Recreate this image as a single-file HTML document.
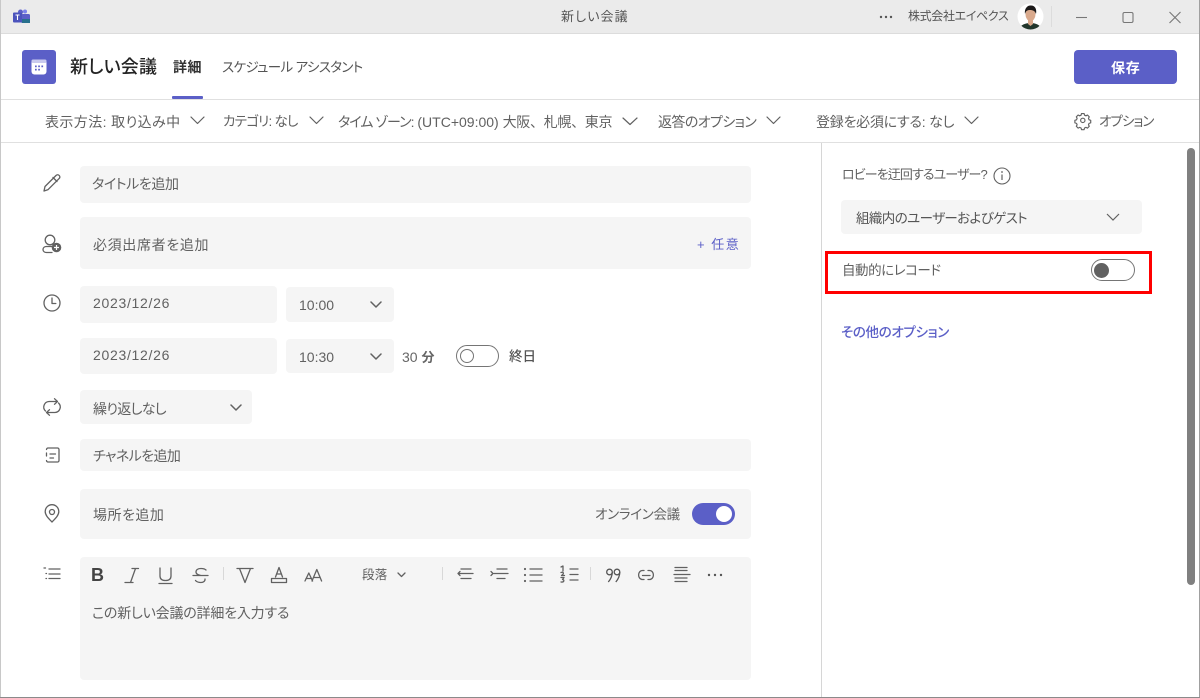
<!DOCTYPE html>
<html lang="ja"><head><meta charset="utf-8"><title>新しい会議</title>
<style>
html,body{margin:0;padding:0;width:1200px;height:698px;overflow:hidden;background:#fff}
body{position:relative;font-family:"Liberation Sans","Noto Sans CJK JP",sans-serif;color:#616161;font-size:14px}
.t{position:absolute;white-space:nowrap;line-height:20px;height:20px;font-feature-settings:"palt" 1}
.b{position:absolute;background:#f5f5f5;border-radius:4px}
.l{position:absolute;background:#e0e0e0}
svg{position:absolute;overflow:visible}
.s{fill:none;stroke:#616161;stroke-width:1.2;stroke-linecap:round;stroke-linejoin:round}
.c{fill:none;stroke:#616161;stroke-width:1.3;stroke-linecap:round;stroke-linejoin:round}
</style></head><body>
<div style="position:absolute;left:0;top:0;width:1200px;height:33px;background:#ebebeb"></div>
<div class="l" style="left:0;top:33px;width:1200px;height:1px;background:#dcdcdc"></div>
<div class="l" style="left:0;top:99px;width:1200px;height:1px"></div>
<div class="l" style="left:0;top:142px;width:1200px;height:1px"></div>
<div class="l" style="left:821px;top:143px;width:1px;height:555px;background:#d6d6d6"></div>
<div style="position:absolute;left:0;top:0;width:1px;height:698px;background:#c8c8c8"></div>
<div style="position:absolute;left:1199px;top:0;width:1px;height:698px;background:#a0a0a0"></div>
<div style="position:absolute;left:0;top:697px;width:1200px;height:1px;background:#8a8a8a"></div>

<svg style="left:12px;top:8px" width="20" height="18" viewBox="0 0 20 18">
<rect x="6" y="1.5" width="5" height="5" rx="2.5" fill="#5b5fc7"/><circle cx="13" cy="3.5" r="2" fill="#7b83eb"/>
<rect x="9" y="6" width="9" height="9" rx="1.5" fill="#5b5fc7"/><rect x="10" y="11" width="8" height="4" fill="#28708c"/>
<rect x="1" y="4.5" width="9" height="10" rx="1" fill="#4b53bc"/><path d="M3.5 7h4M5.5 7v5" stroke="#fff" stroke-width="1.1" fill="none"/></svg>
<div class="t" style="left:561px;top:7px;font-size:13px;color:#555;letter-spacing:1.1px">新しい会議</div>

<svg style="left:879px;top:15px" width="14" height="4"><circle cx="2" cy="2" r="1.2" fill="#555"/><circle cx="7" cy="2" r="1.2" fill="#555"/><circle cx="12" cy="2" r="1.2" fill="#555"/></svg>
<div class="t" style="left:908px;top:6px;font-size:12px;color:#555;letter-spacing:-.35px">株式会社エイペクス</div>
<svg style="left:1017px;top:3px" width="27" height="27" viewBox="0 0 27 27">
<defs><clipPath id="av"><circle cx="13.5" cy="13.5" r="13"/></clipPath></defs>
<circle cx="13.5" cy="13.5" r="13" fill="#fff"/>
<g clip-path="url(#av)"><path d="M2 27c1-5 6-7 11.500-7s10 2 11.500 7z" fill="#21362c"/><ellipse cx="13.500" cy="11.500" rx="5" ry="6.500" fill="#d9a98c"/><path d="M11 17h5v4l-2.500 2-2.500-2z" fill="#d9a98c"/><path d="M8 11c-1-6 3-9 6-8.500 4 0 6 3.500 5 8.500-1-3-3-4-6-4s-4 1-5 4z" fill="#1c1a1a"/></g></svg>
<div class="l" style="left:1051px;top:6px;width:1px;height:21px;background:#dcdcdc"></div>
<svg style="left:1076px;top:10px" width="112" height="14" viewBox="0 0 112 14">
<path d="M0 7.500h11" stroke="#777" stroke-width="1.1" fill="none"/>
<rect x="47" y="2.500" width="10" height="10" rx="1.500" fill="none" stroke="#777" stroke-width="1.100"/>
<path d="M93.500 2l11 11M104.500 2l-11 11" stroke="#777" stroke-width="1.100" fill="none"/></svg>

<div style="position:absolute;left:22px;top:50px;width:34px;height:34px;background:#5b5fc7;border-radius:3px"></div>
<svg style="left:31px;top:59px" width="16" height="16" viewBox="0 0 16 16">
<rect x="0.500" y="0.500" width="15" height="15" rx="3" fill="#fff"/><rect x="0.500" y="0.500" width="15" height="3.500" rx="1.500" fill="#c9caee"/>
<g fill="#5b5fc7"><rect x="4" y="6.500" width="1.700" height="1.700"/><rect x="7.200" y="6.500" width="1.700" height="1.700"/><rect x="10.400" y="6.500" width="1.700" height="1.700"/><rect x="4" y="9.800" width="1.700" height="1.700"/><rect x="7.200" y="9.800" width="1.700" height="1.700"/></g></svg>
<div class="t" style="left:70px;top:57px;font-size:18px;font-weight:500;color:#242424;letter-spacing:.2px">新しい会議</div>
<div class="t" style="left:173px;top:57px;font-size:14px;font-weight:700;color:#333;letter-spacing:.5px">詳細</div>
<div style="position:absolute;left:172px;top:96px;width:31px;height:3px;background:#5b5fc7;border-radius:1px"></div>
<div class="t" style="left:222px;top:58px;font-size:13.500px;color:#555;letter-spacing:-.65px">スケジュール アシスタント</div>
<div style="position:absolute;left:1074px;top:50px;width:103px;height:34px;background:#5b5fc7;border-radius:4px"></div>
<div class="t" style="left:1111px;top:58px;font-size:14px;font-weight:700;color:#fff;letter-spacing:.7px">保存</div>

<div class="t" style="left:45px;top:112px;font-size:14px;letter-spacing:.4px">表示方法: 取り込み中</div>
<div class="t" style="left:223px;top:112px;font-size:13.500px;letter-spacing:-.75px">カテゴリ: なし</div>
<div class="t" style="left:338px;top:112px;font-size:14px"><span style="letter-spacing:-1px">タイム ゾーン:</span> (UTC+09:00) <span style="font-feature-settings:normal;letter-spacing:-.3px">大阪、札幌、東京</span></div>
<div class="t" style="left:658px;top:112px;font-size:14px;letter-spacing:-.6px">返答のオプション</div>
<div class="t" style="left:816px;top:112px;font-size:14px;letter-spacing:-.25px">登録を必須にする: なし</div>
<div class="t" style="left:1099px;top:112px;font-size:13.500px;letter-spacing:-1px">オプション</div>
<svg style="left:0;top:0" width="1200" height="130">
<g class="s"><path d="M191 117l6.500 6.500 6.500-6.500M310 117l6.500 6.500 6.500-6.500M623 118l7 6.500 7-6.500M767 117l6.500 6.500 6.500-6.500M965 117l6.500 6.500 6.500-6.500"/>
<g transform="translate(1082.800 120.500) scale(.72) translate(-1082.800 -120.500)" style="stroke-width:1.600">
<path d="M1081 112.300h3.600l.6 2.300 2 .9 2.100-1.100 2.500 2.600-1.100 2 .8 2 2.300.7v3.600l-2.300.7-.8 2 1.100 2-2.500 2.600-2.100-1.100-2 .9-.6 2.300H1081l-.6-2.300-2-.9-2.100 1.100-2.500-2.600 1.100-2-.8-2-2.300-.7v-3.600l2.300-.7.800-2-1.100-2 2.500-2.600 2.100 1.100 2-.9z" transform="translate(0 -1.500)"/><circle cx="1082.800" cy="120.300" r="3"/></g></g></svg>

<div class="b" style="left:80px;top:166px;width:671px;height:37px"></div>
<div class="t" style="left:92px;top:174px;letter-spacing:-.4px">タイトルを追加</div>
<div class="b" style="left:80px;top:217px;width:671px;height:52px"></div>
<div class="t" style="left:93px;top:235px;letter-spacing:.65px">必須出席者を追加</div>
<div class="t" style="left:697px;top:235px;font-size:13px;color:#5b5fc7;letter-spacing:1.500px">+ 任意</div>
<div class="b" style="left:80px;top:286px;width:197px;height:37px"></div>
<div class="t" style="left:93px;top:293px;letter-spacing:.7px">2023/12/26</div>
<div class="b" style="left:286px;top:287px;width:108px;height:35px"></div>
<div class="t" style="left:299px;top:295px">10:00</div>
<div class="b" style="left:80px;top:338px;width:197px;height:36px"></div>
<div class="t" style="left:93px;top:345px;letter-spacing:.7px">2023/12/26</div>
<div class="b" style="left:286px;top:339px;width:108px;height:34px"></div>
<div class="t" style="left:299px;top:347px">10:30</div>
<div class="t" style="left:402px;top:347px;color:#666">30 <span style="font-weight:700;font-size:13px">分</span></div>
<div style="position:absolute;box-sizing:border-box;left:456px;top:345px;width:43px;height:22px;border:1.300px solid #757575;border-radius:11px;background:#fff"></div>
<div style="position:absolute;box-sizing:border-box;left:460px;top:349px;width:14px;height:14px;border:1.300px solid #757575;border-radius:50%"></div>
<div class="t" style="left:509px;top:347px;font-size:13.500px;font-weight:500;color:#555">終日</div>
<div class="b" style="left:80px;top:390px;width:172px;height:34px"></div>
<div class="t" style="left:93px;top:399px;letter-spacing:-.7px">繰り返しなし</div>
<div class="b" style="left:80px;top:439px;width:671px;height:32px"></div>
<div class="t" style="left:93px;top:446px;letter-spacing:-.6px">チャネルを追加</div>
<div class="b" style="left:80px;top:489px;width:671px;height:50px"></div>
<div class="t" style="left:93px;top:505px;letter-spacing:.5px">場所を追加</div>
<div class="t" style="left:595px;top:505px;font-size:13.500px;letter-spacing:-.3px">オンライン会議</div>
<div style="position:absolute;left:692px;top:503px;width:43px;height:22px;background:#5b5fc7;border-radius:11px"></div>
<div style="position:absolute;left:716px;top:506px;width:16px;height:16px;background:#fff;border-radius:50%"></div>
<div class="b" style="left:80px;top:557px;width:671px;height:123px"></div>
<div class="t" style="left:92px;top:603px;letter-spacing:-.2px">この新しい会議の詳細を入力する</div>
<div class="t" style="left:91px;top:565px;font-size:18px;font-weight:700;color:#444">B</div>
<div class="t" style="left:362px;top:565px;font-size:12.500px;letter-spacing:.2px">段落</div>

<div class="t" style="left:842px;top:165px;font-size:13px;letter-spacing:-.9px">ロビーを迂回するユーザー?</div>
<div class="b" style="left:841px;top:200px;width:301px;height:34px"></div>
<div class="t" style="left:856px;top:209px;font-size:13.500px;color:#555;letter-spacing:-.6px">組織内のユーザーおよびゲスト</div>
<div style="position:absolute;box-sizing:border-box;left:825px;top:251px;width:327px;height:43px;border:3px solid #f00"></div>
<div class="t" style="left:842px;top:261px;font-size:13.500px;letter-spacing:-.45px">自動的にレコード</div>
<div style="position:absolute;box-sizing:border-box;left:1091px;top:259px;width:44px;height:22px;border:1.300px solid #757575;border-radius:11px;background:#fff"></div>
<div style="position:absolute;left:1094px;top:263px;width:15px;height:15px;background:#616161;border-radius:50%"></div>
<div class="t" style="left:841px;top:323px;font-size:13.500px;font-weight:500;color:#5b5fc7;letter-spacing:-.35px">その他のオプション</div>
<div style="position:absolute;left:1187px;top:148px;width:8px;height:437px;background:#808080;border-radius:4px"></div>

<svg style="left:0;top:0" width="1200" height="698">
<g class="c">
<path d="M371 302l5 5 5-5M371 354l5 5 5-5M231 405l5 5 5-5" stroke-width="1.500"/>
<path d="M398 573l3.500 3.500 3.500-3.500"/>
<path d="M44 191l1-4.500 11-11c1-1 2.300-1 3.200 0 .9 1 .8 2.200-.1 3.100l-11 11z"/><path d="M53 177.500l4 4"/>
<circle cx="50" cy="240" r="4.800"/><path d="M52 246.500h-5.500c-2 0-3.500 1.200-3.500 3s1.500 3 3.500 3h5.500"/>
<circle cx="52" cy="303" r="8"/><path d="M52 298v5.500h3.800"/>
<path d="M45.500 411a5.500 5.500 0 0 1 3.500-9.500h8M54.500 398.700l3 2.800-3 2.800M58.500 403a5.500 5.500 0 0 1-3.500 9.500h-8M49.500 415.300l-3-2.800 3-2.800"/>
<path d="M46.500 449.500a1.500 1.500 0 0 1 1.500-1.500h9.500a1.500 1.500 0 0 1 1.500 1.500v11a1.500 1.500 0 0 1-1.500 1.500h-9.500a1.500 1.500 0 0 1-1.500-1.500M50 454h5.500M50 458h3.500M46.500 453v3"/>
<path d="M52 522c-3-3.200-6.800-6.500-6.800-10.500a6.800 6.800 0 0 1 13.600 0c0 4-3.800 7.300-6.800 10.500z"/><circle cx="52" cy="512" r="2.500"/>
<path d="M49 569h11M49 574h11M49 578.500h11"/>
<path d="M44 568h1.500M46 573.500h.5M46 578.500h.5"/>
<path d="M125 582.500h8M132 568.500h6.500M135.500 568.500l-5 14"/>
<path d="M160 568v8c0 3 2 4.500 5.500 4.500s5.500-1.500 5.500-4.500v-8M159 583.500h13"/>
<path d="M206 570c-1-1-3-1.500-5-1.500-3 0-5 1.400-5 3.500 0 2.500 3 3 5 3.500M193 575.500h15M205 579c.3 2-1.500 3.500-4 3.500-2.500 0-4.500-.8-5.500-2"/>
<path d="M237 568.500h16M239.500 568.500l5.500 14 5.500-14"/>
<path d="M275.500 577l3.500-9.500 3.500 9.500M276.500 574h5"/><rect x="271.500" y="578.500" width="15" height="4"/>
<path d="M305 581l3.800-8 3.800 8M306 578.500h5M312 581l4.800-11.500 4.800 11.500M313.500 577.500h6.500"/>
<path d="M458 573.500h15M461 569h10M461 578.500h10M460 571.500l-2 2 2 2"/>
<path d="M491 571.500l2 2-2 2M494 573.500h14M497 569h10M497 578.500h8"/>
<path d="M530 569h12M530 575h12M530 581h12"/>
<path d="M570 569h8M570 574.500h8M570 580h8"/><path d="M561 567l2-1v5M561 572.500c2.500-1 3.500 1 .5 3h3M561 577.500h3l-1.500 2c2 0 2 3-1.500 2.500"/>
<path d="M644 570.500h-1.500c-2.300 0-3.900 2-3.900 4.500s1.600 4.500 3.900 4.500h1.500M648 570.500h1.500c2.300 0 3.900 2 3.900 4.500s-1.600 4.500-3.900 4.500H648M642.500 575.500h7.500"/>
<path d="M675 567.500h12M675 570.500h12M674 574.500h16M675 578h12M675 581.500h12"/>
</g>
<g fill="#616161"><circle cx="525" cy="569" r="1.100"/><circle cx="525" cy="575" r="1.100"/><circle cx="525" cy="581" r="1.100"/></g>
<g fill="none" stroke="#555" stroke-width="1.300"><circle cx="609.500" cy="572" r="2.800"/><path d="M612.300 572c0 4-1.500 7-4 10"/><circle cx="617" cy="572" r="2.800"/><path d="M619.800 572c0 4-1.500 7-4 10"/></g>
<circle cx="56.500" cy="247.500" r="4.800" fill="#616161"/><path d="M56.500 245v5M54 247.500h5" stroke="#fff" stroke-width="1.200"/>
<g fill="#555"><circle cx="709" cy="575" r="1.200"/><circle cx="715" cy="575" r="1.200"/><circle cx="721" cy="575" r="1.200"/></g>
<path d="M223.500 567v13M442.500 567v13M590.500 567v13" stroke="#d8d8d8" stroke-width="1"/>
<path d="M1107 214l6 6 6-6" fill="none" stroke="#616161" stroke-width="1.200"/>
<circle cx="1002" cy="176" r="8" fill="none" stroke="#616161" stroke-width="1.100"/>
<path d="M1002 174.500v5.500" stroke="#616161" stroke-width="1.200"/><circle cx="1002" cy="172" r=".9" fill="#616161"/>
</svg>
</body></html>
